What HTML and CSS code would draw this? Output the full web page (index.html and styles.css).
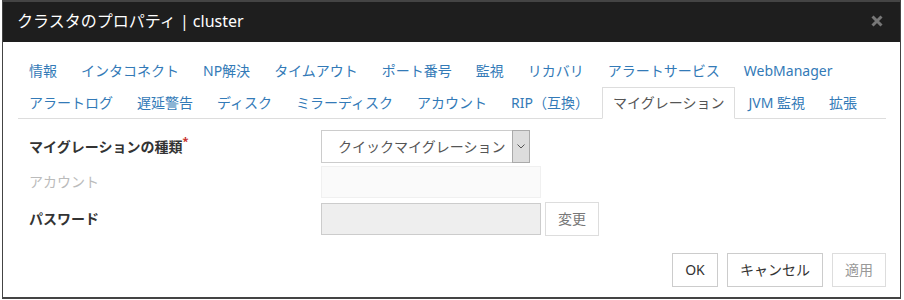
FILE: index.html
```html
<!DOCTYPE html>
<html lang="ja">
<head>
    <meta charset="UTF-8">
    <meta name="viewport" content="width=device-width, initial-scale=1.0">
    <title>クラスタのプロパティ</title>
    <link rel="stylesheet" href="styles.css">
</head>
<body>
    <div class="dialog">
        <div class="dialog-header">
            <span class="dialog-title">クラスタのプロパティ | cluster</span>
            <span class="close">
                <svg width="12" height="12" viewBox="0 0 12 12">
                    <path d="M1.5 1.5 L10.5 10.5 M10.5 1.5 L1.5 10.5" stroke="#777" stroke-width="3" fill="none"/>
                </svg>
            </span>
        </div>

        <div class="dialog-body">
            <div class="tabs">
                <div class="tab-row">
                    <a class="tab">情報</a>
                    <a class="tab">インタコネクト</a>
                    <a class="tab">NP解決</a>
                    <a class="tab">タイムアウト</a>
                    <a class="tab">ポート番号</a>
                    <a class="tab">監視</a>
                    <a class="tab">リカバリ</a>
                    <a class="tab">アラートサービス</a>
                    <a class="tab">WebManager</a>
                </div>
                <div class="tab-row">
                    <a class="tab">アラートログ</a>
                    <a class="tab">遅延警告</a>
                    <a class="tab">ディスク</a>
                    <a class="tab">ミラーディスク</a>
                    <a class="tab">アカウント</a>
                    <a class="tab">RIP（互換）</a>
                    <a class="tab active">マイグレーション</a>
                    <a class="tab">JVM 監視</a>
                    <a class="tab">拡張</a>
                </div>
            </div>

            <div class="form">
                <div class="form-row row-type">
                    <label class="label">マイグレーションの種類<sup class="required">*</sup></label>
                    <div class="select">
                        <span class="select-text">クイックマイグレーション</span>
                        <span class="select-arrow">
                            <svg width="8" height="5" viewBox="0 0 8 5">
                                <path d="M0.5 0.5 L4 4 L7.5 0.5" stroke="#555" stroke-width="1" fill="none"/>
                            </svg>
                        </span>
                    </div>
                </div>
                <div class="form-row row-account">
                    <label class="label disabled">アカウント</label>
                    <div class="input input-disabled"></div>
                </div>
                <div class="form-row row-password">
                    <label class="label">パスワード</label>
                    <div class="input input-readonly"></div>
                    <button class="btn btn-change">変更</button>
                </div>
            </div>

            <div class="dialog-footer">
                <button class="btn">OK</button>
                <button class="btn">キャンセル</button>
                <button class="btn btn-disabled">適用</button>
            </div>
        </div>
    </div>
</body>
</html>
```

FILE: styles.css
```css
body {
    margin: 0;
    background-color: #fff;
    font-family: 'Noto Sans', 'Noto Sans CJK JP', sans-serif;
    font-size: 14px;
    color: #333;
}

.dialog {
    box-sizing: border-box;
    width: 899px;
    margin-left: 2px;
    border: 1px solid #444;
    border-top-width: 2px;
    border-bottom-width: 2px;
    background-color: #fff;
}

.dialog-header {
    height: 40px;
    background-color: #1e1e1e;
    display: flex;
    align-items: center;
    justify-content: space-between;
    padding: 0 17px 0 14px;
}

.dialog-title {
    color: #fff;
    font-size: 16px;
    line-height: 22px;
    margin-top: -2px;
}

.close {
    display: flex;
    margin-top: -2px;
}

.dialog-body {
    padding: 13px 14px 10px 15px;
}

/* タブ */
.tabs {
    border-bottom: 1px solid #ddd;
}

.tab-row {
    display: flex;
}

.tab {
    display: block;
    padding: 5px 10px;
    margin-right: 2px;
    margin-bottom: -1px;
    line-height: 20px;
    border: 1px solid transparent;
    color: #337ab7;
    white-space: nowrap;
    cursor: pointer;
}

.tab-row:first-child .tab {
    margin-bottom: 0;
}

.tab.active {
    color: #555;
    background-color: #fff;
    border-color: #ddd #ddd transparent;
}

/* フォーム */
.form {
    margin-top: 11px;
    padding-left: 11px;
}

.form-row {
    display: flex;
    align-items: center;
}

.row-type {
    height: 33px;
}

.row-account {
    height: 32px;
    margin-top: 3px;
}

.row-password {
    height: 34px;
    margin-top: 4px;
}

.label {
    width: 292px;
    font-weight: bold;
    color: #333;
    line-height: 20px;
}

.label.disabled {
    font-weight: normal;
    color: #bbb;
}

.required {
    color: #c9302c;
    font-size: 11px;
    line-height: 0;
    position: relative;
    top: -1px;
}

.select {
    box-sizing: border-box;
    width: 209px;
    height: 33px;
    border: 1px solid #ccc;
    display: flex;
    align-items: stretch;
    background-color: #fff;
}

.select-text {
    flex: 1;
    padding-left: 16px;
    line-height: 31px;
    color: #555;
    white-space: nowrap;
    overflow: hidden;
}

.select-arrow {
    width: 16px;
    margin: -1px -1px -1px 0;
    background-color: #ddd;
    border: 1px solid #aaa;
    display: flex;
    align-items: center;
    justify-content: center;
}

.input {
    box-sizing: border-box;
    width: 220px;
    height: 32px;
    border: 1px solid #ccc;
}

.input-disabled {
    background-color: #fafafa;
    border-color: #f0f0f0;
}

.input-readonly {
    background-color: #eee;
}

.btn {
    box-sizing: border-box;
    min-width: 46px;
    height: 34px;
    padding: 0 12px;
    border: 1px solid #ccc;
    border-radius: 0;
    background-color: #fff;
    color: #333;
    font-family: inherit;
    font-size: 14px;
    line-height: 20px;
    cursor: pointer;
}

.btn-change {
    margin-left: 4px;
    color: #777;
    border-color: #ddd;
}

.btn-disabled {
    color: #999;
    border-color: #ddd;
}

.dialog-footer {
    display: flex;
    justify-content: flex-end;
    gap: 9px;
    margin-top: 17px;
}
```
